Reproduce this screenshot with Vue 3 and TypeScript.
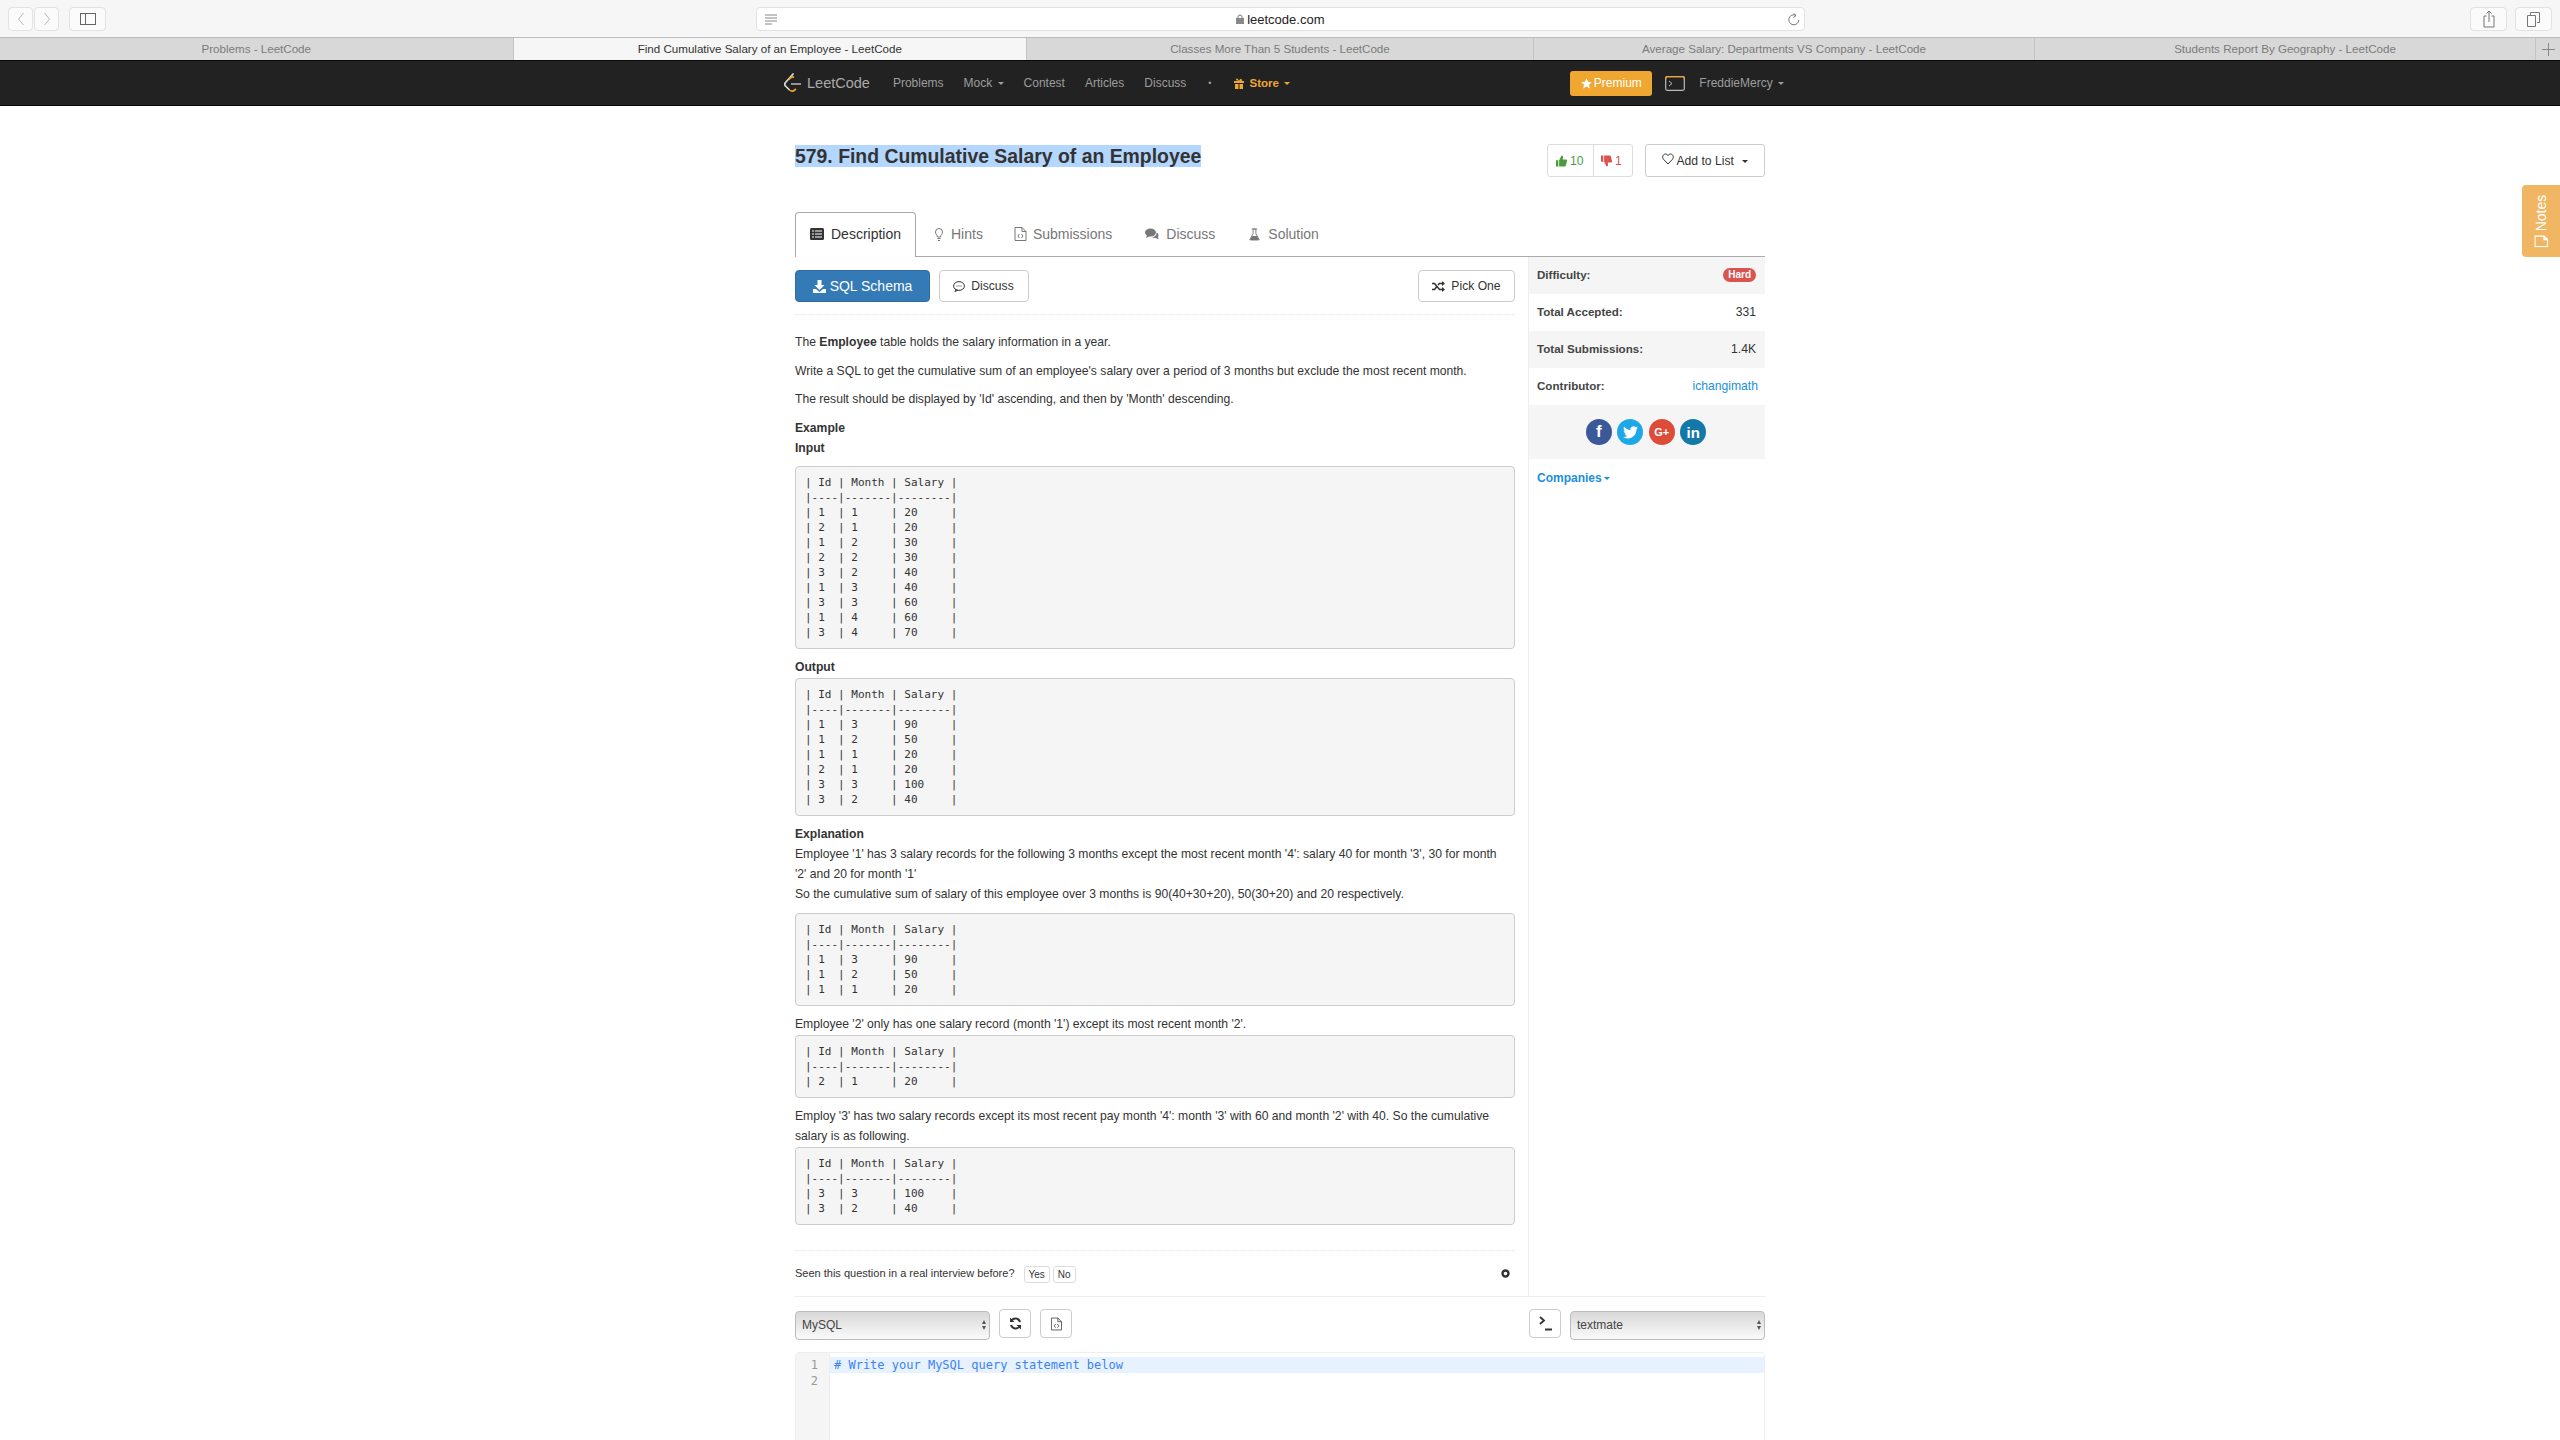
<template>
  <div class="page">
    <div class="toolbar">
      <div class="tb-left">
        <span class="tb-btn small"><svg width="8" height="16" viewBox="0 0 8 16"><path d="M6.500 2 1.500 8l5 6" fill="none" stroke="#b5b5b5" /></svg></span>
        <span class="tb-btn small"><svg width="8" height="16" viewBox="0 0 8 16"><path d="M1.500 2l5 6-5 6" fill="none" stroke="#b5b5b5" /></svg></span>
        <span class="tb-btn wide"><svg width="16" height="12" viewBox="0 0 16 12"><rect x=".5" y=".5" width="15" height="11" fill="none" stroke="#666" /><path d="M5.500 0v12" stroke="#666" /></svg></span>
      </div>
      <div class="address">
        <svg class="reader" width="12" height="11" viewBox="0 0 12 11"><path d="M0 1h12M0 4h12M0 7h12M0 10h7" stroke="#888" /></svg>
        <span class="url"><svg width="8" height="10" viewBox="0 0 8 10"><path d="M2 4V3a2 2 0 0 1 4 0v1" fill="none" stroke="#777" /><rect y="4" width="8" height="6" fill="#888" /></svg> leetcode.com</span>
        <svg class="reload" width="13" height="13" viewBox="0 0 13 13"><path d="M9 2.300A5 5 0 1 0 11.800 7M6.500.300 9 2.500 6.500 4.500" fill="none" stroke="#777" /></svg>
      </div>
      <div class="tb-right">
        <span class="tb-btn wide"><svg width="12" height="18" viewBox="0 0 12 18"><path d="M3.500 6H1v11h10V6H8.500M6 12V1M3.500 3.500 6 1l2.500 2.500" fill="none" stroke="#777" /></svg></span>
        <span class="tb-btn wide"><svg width="13" height="15" viewBox="0 0 13 15"><path d="M3.500 3V.5h9v10H10M.5 3.500h8v11h-8z" fill="none" stroke="#777" /></svg></span>
      </div>
    </div>

    <div class="tabstrip">
      <div v-for="(t, i) in browserTabs" :key="t" class="btab" :class="{ on: i === 1 }">{{ t }}</div>
      <div class="btab plus"><svg width="13" height="13" viewBox="0 0 13 13"><path d="M6.500 0v13M0 6.500h13" stroke="#888" /></svg></div>
    </div>

    <nav class="nav">
      <div class="nav-inner">
        <div class="nav-left">
          <span class="logo">
            <svg width="17" height="20" viewBox="0 0 17 20">
              <path d="M9.500.5 1.500 9.500c-1 1.200-1 2.500 0 3.500l4 4" fill="none" stroke="#d8d8d8" stroke-width="1.700" />
              <path d="M4.500 6.500 7 4.500c1-.8 2-.8 3 0" fill="none" stroke="#f0a732" stroke-width="1.700" />
              <path d="M5.500 17c1.500 1.500 3 1.500 4.500.5L12 16" fill="none" stroke="#f0a732" stroke-width="1.700" />
              <path d="M7 11h10" stroke="#a8a8a8" stroke-width="1.700" />
            </svg>
            <span>LeetCode</span>
          </span>
          <a>Problems</a>
          <a>Mock <i class="caret"></i></a>
          <a>Contest</a>
          <a>Articles</a>
          <a>Discuss</a>
          <a class="dot">•</a>
          <a class="store">
            <svg width="10" height="11" viewBox="0 0 10 11"><path d="M0 3h10v2H0zM1 6h3.500v5H1zM5.500 6H9v5H5.500zM5 3C3 3 2 2 2 1s2-1 3 2c1-3 3-2 3-1s-1 2-3 2z" fill="#f0a732" /></svg>
            <span>Store</span> <i class="caret"></i>
          </a>
        </div>
        <div class="nav-right">
          <span class="premium"><svg width="11" height="11" viewBox="0 0 24 24"><path d="m12 1 3.400 7.400 8 .9-6 5.400 1.700 8L12 18.700l-7.100 4 1.700-8-6-5.400 8-.9z" fill="#fff" /></svg> Premium</span>
          <span class="term"><svg width="20" height="15" viewBox="0 0 20 15"><rect x=".7" y=".7" width="18.600" height="13.600" rx="1.500" fill="none" stroke="#bbb" stroke-width="1.200" /><path d="M.7 3.500V2.200A1.500 1.500 0 0 1 2.200.7h15.600a1.500 1.500 0 0 1 1.500 1.500v1.300" fill="none" stroke="#f0a732" stroke-width="1.200" /><path d="m4 5 3 2.500L4 10" fill="none" stroke="#bbb" /></svg></span>
          <a class="user">FreddieMercy <i class="caret"></i></a>
        </div>
      </div>
    </nav>

    <main class="container">
      <div class="head">
        <h3 class="title"><span>579. Find Cumulative Salary of an Employee</span></h3>
        <div class="head-actions">
          <div class="likes">
            <span class="like">
              <svg width="11" height="12" viewBox="0 0 14 14"><path d="M0 6h3v8H0zM4 6l3-6c1.500 0 2 1 2 2.500L8.500 5H13c1 0 1.300 1 1 2l-1.500 6c-.2.700-.7 1-1.500 1H4z" fill="#4a9c3f" /></svg>
              10
            </span>
            <span class="dislike">
              <svg width="11" height="12" viewBox="0 0 14 14"><path d="M0 0h3v8H0zM4 8l3 6c1.500 0 2-1 2-2.500L8.500 9H13c1 0 1.300-1 1-2l-1.500-6c-.2-.700-.7-1-1.500-1H4z" fill="#d9534f" /></svg>
              1
            </span>
          </div>
          <button class="add-list">
            <svg width="12" height="12" viewBox="0 0 24 24"><path d="M12 22 3 12.500C-1 7 3 2 7 2c2 0 4 1 5 3 1-2 3-3 5-3 4 0 8 5 4 10.500z" fill="none" stroke="#333" stroke-width="2" /></svg>
            Add to List <i class="caret dark"></i>
          </button>
        </div>
      </div>

      <ul class="tabs">
        <li class="on">
          <svg width="14" height="12" viewBox="0 0 14 12"><rect width="14" height="12" rx="1.500" fill="#333" /><path d="M2 3h2M5 3h7M2 6h2M5 6h7M2 9h2M5 9h7" stroke="#fff" /></svg>
          Description
        </li>
        <li class="hints">
          <svg width="8" height="13" viewBox="0 0 8 13"><path d="M2.500 9C2.500 7 .5 6.500.5 4a3.500 3.500 0 0 1 7 0c0 2.500-2 3-2 5zM2.500 10.500h3M3 12.500h2" fill="none" stroke="#777" /></svg>
          Hints
        </li>
        <li class="subs">
          <svg width="13" height="14" viewBox="0 0 12 14"><path d="M.5.500h7l4 4v9H.5zM7.500.500v4h4M5 7 3.500 9 5 11M7 7l1.500 2L7 11" fill="none" stroke="#777" /></svg>
          Submissions
        </li>
        <li class="disc">
          <svg width="14" height="12" viewBox="0 0 14 12"><ellipse cx="5.500" cy="4.500" rx="5.500" ry="4" fill="#777" /><path d="M2 7 1 10l4-2zM11.500 4.500c2 .7 2.500 3 1.500 4.300l.5 2.700L11 10c-1.500.3-3 0-4-1 3 0 5-1.800 4.500-4.500z" fill="#777" /></svg>
          Discuss
        </li>
        <li class="sol">
          <svg width="11" height="13" viewBox="0 0 12 13"><path d="M4.500.500h3v5l3.500 6.500-.500.500H1.500l-.5-.5 3.500-6.500zM3 .500h6" fill="none" stroke="#777" /><path d="M3.500 8h5l2.500 4.500H1z" fill="#777" /></svg>
          Solution
        </li>
      </ul>

      <div class="columns">
        <div class="main-col">
          <div class="actions">
            <button class="btn primary">
              <svg width="13" height="13" viewBox="0 0 13 13"><path d="M4.500 0h4v5h3L6.500 10l-5-5h3zM0 9h3l3.500 3L10 9h3v4H0z" fill="#fff" /></svg>
              SQL Schema
            </button>
            <button class="btn small-btn">
              <svg width="12" height="11" viewBox="0 0 12 11"><ellipse cx="6" cy="5" rx="5.400" ry="4.400" fill="none" stroke="#333" /><path d="M3 8 2 10.500 5 9" fill="none" stroke="#333" /><path d="M3.500 5h1M5.500 5h1M7.500 5h1" stroke="#333" /></svg>
              Discuss
            </button>
            <button class="btn small-btn pick">
              <svg width="13" height="11" viewBox="0 0 13 11"><path d="M0 2.500h2.500l5 6H10M0 8.500h2.500L4.500 6M6 4l1.500-1.500H10" fill="none" stroke="#333" stroke-width="1.600" /><path d="M10 0l3 2.500L10 5zM10 6l3 2.500L10 11z" fill="#333" /></svg>
              Pick One
            </button>
          </div>

          <div class="question">
            <p>The <b>Employee</b> table holds the salary information in a year.</p>
            <p>Write a SQL to get the cumulative sum of an employee's salary over a period of 3 months but exclude the most recent month.</p>
            <p>The result should be displayed by 'Id' ascending, and then by 'Month' descending.</p>
            <p class="flush"><b>Example</b></p>
            <p><b>Input</b></p>
            <pre>{{ inputTable }}</pre>
            <p class="snug"><b>Output</b></p>
            <pre>{{ outputTable }}</pre>
            <p><b>Explanation</b><br />Employee '1' has 3 salary records for the following 3 months except the most recent month '4': salary 40 for month '3', 30 for month '2' and 20 for month '1'<br />So the cumulative sum of salary of this employee over 3 months is 90(40+30+20), 50(30+20) and 20 respectively.</p>
            <pre>{{ emp1Table }}</pre>
            <p class="snug">Employee '2' only has one salary record (month '1') except its most recent month '2'.</p>
            <pre>{{ emp2Table }}</pre>
            <p class="snug">Employ '3' has two salary records except its most recent pay month '4': month '3' with 60 and month '2' with 40. So the cumulative salary is as following.</p>
            <pre class="last">{{ emp3Table }}</pre>
          </div>

          <div class="interview">
            <span>Seen this question in a real interview before?</span>
            <button class="yes">Yes</button>
            <button>No</button>
            <svg class="gear" width="9" height="9" viewBox="0 0 9 9"><circle cx="4.500" cy="4.500" r="3" fill="none" stroke="#333" stroke-width="2.400" /></svg>
          </div>
        </div>

        <aside class="side">
          <div class="row grey"><b>Difficulty:</b><span class="hard">Hard</span></div>
          <div class="row"><b>Total Accepted:</b><span>331</span></div>
          <div class="row grey"><b>Total Submissions:</b><span>1.4K</span></div>
          <div class="row"><b>Contributor:</b><a class="link">ichangimath</a></div>
          <div class="share">
            <span class="fb">f</span>
            <span class="tw"><svg width="15" height="13" viewBox="0 0 24 20"><path d="M24 2.400c-.9.400-1.800.700-2.800.800 1-.6 1.800-1.600 2.200-2.700-1 .6-2 1-3.100 1.200A4.900 4.900 0 0 0 11.900 6.200C7.800 6 4.200 4 1.700.9c-1.300 2.200-.7 5.100 1.500 6.600-.8 0-1.600-.2-2.200-.6 0 2.400 1.700 4.400 3.900 4.900-.7.200-1.500.2-2.200.1.600 2 2.400 3.400 4.600 3.400A9.900 9.900 0 0 1 0 17.300 14 14 0 0 0 21.500 4.900c1-.7 1.800-1.500 2.500-2.500z" fill="#fff" /></svg></span>
            <span class="gp">G+</span>
            <span class="li">in</span>
          </div>
          <a class="companies">Companies<i class="caret blue"></i></a>
        </aside>
      </div>

      <div class="editor-bar">
        <div class="select lang">MySQL<i class="updown"></i></div>
        <button class="icon-btn"><svg width="13" height="13" viewBox="0 0 13 13"><path d="M11 5A4.800 4.800 0 0 0 2.500 3.500M2 8a4.800 4.800 0 0 0 8.500 1.500" fill="none" stroke="#333" stroke-width="2" /><path d="M1 .5v4.500h4.500zM12 12.500V8H7.500z" fill="#333" /></svg></button>
        <button class="icon-btn"><svg width="11" height="14" viewBox="0 0 12 14"><path d="M.5.500h7l4 4v9H.5zM7.500.500v4h4M5 7 3.500 9 5 11M7 7l1.500 2L7 11" fill="none" stroke="#555" /></svg></button>
        <span class="grow"></span>
        <button class="icon-btn term-btn"><svg width="13" height="15" viewBox="0 0 13 15"><path d="m1 1 4 3.500L1 8" fill="none" stroke="#333" stroke-width="1.800" /><path d="M6 13.500h7" stroke="#333" stroke-width="2" /></svg></button>
        <div class="select theme">textmate<i class="updown"></i></div>
      </div>

      <div class="editor">
        <div class="gutter"><div>1</div><div>2</div></div>
        <div class="code"><div class="active"># Write your MySQL query statement below</div></div>
      </div>
    </main>

    <div class="notes">
      <span><svg width="12" height="14" viewBox="0 0 12 14"><path d="M.7.700h10.600v9l-3.500 3.600H.7zM7.800 13.300V9.700h3.500" fill="none" stroke="#fff" stroke-width="1.300" /></svg> Notes</span>
    </div>
  </div>
</template>

<script setup lang="ts">
const browserTabs = [
  'Problems - LeetCode',
  'Find Cumulative Salary of an Employee - LeetCode',
  'Classes More Than 5 Students - LeetCode',
  'Average Salary: Departments VS Company - LeetCode',
  'Students Report By Geography - LeetCode'
]

const head = `| Id | Month | Salary |
|----|-------|--------|`

function table(rows: Array<[number, number, number]>): string {
  const body = rows.map(([id, month, salary]) =>
    `| ${id}  | ${String(month).padEnd(5)} | ${String(salary).padEnd(6)} |`)
  return [head, ...body].join('\n')
}

const inputTable = table([
  [1, 1, 20], [2, 1, 20], [1, 2, 30], [2, 2, 30], [3, 2, 40],
  [1, 3, 40], [3, 3, 60], [1, 4, 60], [3, 4, 70]
])
const outputTable = table([
  [1, 3, 90], [1, 2, 50], [1, 1, 20], [2, 1, 20], [3, 3, 100], [3, 2, 40]
])
const emp1Table = table([[1, 3, 90], [1, 2, 50], [1, 1, 20]])
const emp2Table = table([[2, 1, 20]])
const emp3Table = table([[3, 3, 100], [3, 2, 40]])
</script>

<style>
html, body { margin: 0; height: 1440px; overflow: hidden; background: #fff; }
</style>

<style scoped>
.page {
  position: relative;
  height: 1440px;
  overflow: hidden;
  font-family: "Liberation Sans", Arial, sans-serif;
  font-size: 12.15px;
  color: #333;
}
.toolbar {
  height: 37px;
  box-sizing: border-box;
  background: #f6f6f6;
  display: flex;
  justify-content: space-between;
  padding: 7px 8px 0;
}
.tb-left { display: flex; gap: 1px; }
.tb-left .wide { margin-left: 9px; }
.tb-right { display: flex; gap: 8px; }
.tb-btn {
  height: 24px;
  box-sizing: border-box;
  border: 1px solid #e2e2e2;
  border-radius: 4px;
  background: #fbfbfb;
  display: flex;
  align-items: center;
  justify-content: center;
}
.tb-btn.small { width: 25px; }
.tb-btn.wide { width: 37px; }
.address {
  width: 1049px;
  height: 24px;
  box-sizing: border-box;
  border: 1px solid #e2e2e2;
  border-radius: 4px;
  background: #fff;
  display: flex;
  align-items: center;
  justify-content: center;
  color: #222;
  font-size: 13px;
  position: relative;
  margin-right: 16px;
}
.reader { position: absolute; left: 8px; top: 6px; }
.reload { position: absolute; right: 4px; top: 5px; }
.tabstrip {
  height: 23px;
  box-sizing: border-box;
  display: flex;
  background: #d8d8d8;
  border-top: 1px solid #bcbcbc;
  font-size: 11.6px;
  color: #7b7b7b;
}
.btab {
  flex: 0 0 501px;
  box-sizing: border-box;
  text-align: center;
  line-height: 22px;
  border-right: 1px solid #c4c4c4;
}
.btab:nth-child(1), .btab:nth-child(2) { flex-basis: 513.5px; }
.btab:nth-child(3) { flex-basis: 507px; }
.btab.on { background: #f6f6f6; color: #333; }
.btab.plus { flex: 1; border: none; display: flex; align-items: center; justify-content: center; }
.nav {
  height: 46px;
  box-sizing: border-box;
  background: #222;
  border-top: 1px solid #080808;
  border-bottom: 1px solid #080808;
}
.nav-inner {
  width: 970px;
  margin: 0 auto;
  height: 44px;
  display: flex;
  justify-content: space-between;
  align-items: center;
  color: #9d9d9d;
  font-size: 12px;
}
.nav-left, .nav-right { display: flex; align-items: center; }
.nav-left a { margin-left: 20px; }
.logo { display: flex; align-items: center; gap: 6px; margin-left: -11px; margin-right: 3px; font-size: 14.5px; color: #aaa; }
.nav-left .dot { font-size: 9px; margin-left: 22px; }
.nav-left .store {
  color: #f0a732;
  font-weight: bold;
  font-size: 11.5px;
  margin-left: 23px;
  display: flex;
  align-items: center;
  gap: 5px;
}
.store .caret { margin-left: 0; }
.caret {
  display: inline-block;
  width: 0;
  height: 0;
  vertical-align: middle;
  margin-left: 2px;
  border-top: 3px solid;
  border-left: 3px solid transparent;
  border-right: 3px solid transparent;
}
.premium {
  background: #f0a732;
  color: #fff;
  height: 25px;
  width: 82px;
  display: flex;
  align-items: center;
  justify-content: center;
  gap: 2px;
  border-radius: 3px;
}
.term { margin-left: 13px; display: flex; }
.user { margin-left: 14px; margin-right: -19px; }

.container { width: 970px; margin: 0 auto; }
.head {
  display: flex;
  justify-content: space-between;
  height: 106px;
}
.title {
  margin: 0;
  padding-top: 38px;
  font-size: 19.4px;
  line-height: 24px;
  font-weight: bold;
}
.title span { background: #b3d7ff; }
.head-actions { display: flex; gap: 12px; padding-top: 38px; align-items: flex-start; }
.likes {
  display: flex;
  width: 86px;
  height: 33px;
  box-sizing: border-box;
  border: 1px solid #ddd;
  border-radius: 3px;
  align-items: center;
}
.like, .dislike { height: 100%; display: flex; align-items: center; gap: 3px; box-sizing: border-box; }
.like { color: #4a9c3f; border-right: 1px solid #ddd; width: 46px; padding-left: 8px; }
.dislike { color: #d9534f; padding-left: 7px; }
.add-list {
  height: 33px;
  width: 120px;
  padding: 0;
  background: #fff;
  border: 1px solid #ccc;
  border-radius: 3px;
  font: inherit;
  color: #333;
}
.add-list .caret { margin-left: 5px; }
.tabs {
  list-style: none;
  margin: 0;
  padding: 0;
  display: flex;
  height: 45px;
  box-sizing: border-box;
  border-bottom: 1px solid #aaa;
  font-size: 14px;
  color: #777;
}
.tabs li {
  display: flex;
  align-items: center;
  gap: 6px;
  padding: 0 16px;
}
.tabs li.hints { padding: 0 15px 0 19px; gap: 8px; }
.tabs li.subs { padding-right: 17px; }
.tabs li.disc { gap: 7px; padding-right: 18px; }
.tabs li.sol { gap: 8px; }
.tabs li.on {
  color: #333;
  height: 45px;
  box-sizing: border-box;
  width: 121px;
  padding: 0 0 2px 14px;
  gap: 7px;
  background: #fff;
  border: 1px solid #aaa;
  border-bottom: none;
  border-radius: 4px 4px 0 0;
}
.columns { display: flex; gap: 13px; }
.main-col { width: 720px; flex: none; }
.actions {
  display: flex;
  gap: 8.500px;
  padding-top: 13px;
  height: 58px;
  box-sizing: border-box;
  border-bottom: 1px dotted #e5e5e5;
  align-items: flex-start;
}
.btn {
  height: 32px;
  box-sizing: border-box;
  border: 1px solid #ccc;
  border-radius: 4px;
  background: #fff;
  color: #333;
  font: inherit;
  display: flex;
  align-items: center;
  justify-content: center;
  gap: 4px;
  padding: 0;
}
.primary { width: 135px; background: #337ab7; border-color: #2e6da4; color: #fff; font-size: 14px; }
.small-btn { width: 90px; }
.small-btn svg { margin-right: 2px; }
.pick { width: 97px; margin-left: auto; }
.question { padding-top: 17px; line-height: 20px; }
.question p { margin: 0 0 8.5px; padding-right: 8px; }
.question p.flush { margin-bottom: 0; }
.question p.snug { margin-bottom: 1px; }
pre {
  margin: 0 0 8px;
  padding: 8px 9px;
  background: #f5f5f5;
  border: 1px solid #ccc;
  border-radius: 4px;
  font-family: "DejaVu Sans Mono", monospace;
  font-size: 11px;
  line-height: 15px;
}
pre.last { margin-bottom: 25px; }
.interview {
  border-top: 1px dotted #e5e5e5;
  height: 46.500px;
  box-sizing: border-box;
  display: flex;
  align-items: center;
  font-size: 11px;
}
.interview button {
  height: 17px;
  padding: 0 4px;
  margin: 2px 0 0 3px;
  background: #fff;
  border: 1px solid #ddd;
  border-radius: 3px;
  font: inherit;
  font-size: 10px;
  color: #333;
}
.interview button.yes { margin-left: 9px; }
.gear { margin-left: auto; margin-right: 5px; }
.side { width: 237px; border-left: 1px solid #eee; }
.row {
  height: 37px;
  box-sizing: border-box;
  display: flex;
  justify-content: space-between;
  align-items: center;
  padding: 0 9px 2px 8px;
}
.row b { color: #444; font-size: 11.6px; }
.grey { background: #f5f5f5; }
.hard {
  background: #d9534f;
  color: #fff;
  font-size: 10px;
  font-weight: bold;
  line-height: 12px;
  padding: 1px 5px;
  border-radius: 8px;
}
.link, .companies { color: #1a8fdc; }
.link { margin-right: -2px; }
.share {
  height: 54px;
  background: #f5f5f5;
  display: flex;
  justify-content: center;
  align-items: center;
  gap: 5.500px;
  padding-right: 2px;
}
.share span {
  width: 26px;
  height: 26px;
  border-radius: 50%;
  color: #fff;
  font-weight: bold;
  display: flex;
  align-items: center;
  justify-content: center;
  font-size: 13px;
}
.share .fb { background: #3b5998; font-size: 17px; }
.tw { background: #1fa8e8; }
.share .gp { background: #dd4b39; font-size: 11px; }
.share .li { background: #1478a8; font-size: 15px; }
.companies { display: block; padding: 12px 8px; font-weight: bold; font-size: 12px; }
.editor-bar {
  display: flex;
  gap: 9px;
  align-items: flex-start;
  height: 56px;
  padding-top: 12px;
  box-sizing: border-box;
  border-top: 1px solid #eee;
}
.grow { flex: 1; }
.select {
  height: 29px;
  margin-top: 2px;
  box-sizing: border-box;
  border: 1px solid #bbb;
  border-radius: 4px;
  background: linear-gradient(#d8d8d8, #fafafa);
  padding: 0 6px;
  line-height: 27px;
  position: relative;
  color: #444;
  font-size: 12px;
}
.updown {
  position: absolute;
  right: 3px;
  top: 8px;
  width: 0;
  height: 0;
  border-left: 2.500px solid transparent;
  border-right: 2.500px solid transparent;
  border-bottom: 4px solid #555;
}
.updown::after {
  content: "";
  position: absolute;
  left: -2.500px;
  top: 6px;
  border-left: 2.500px solid transparent;
  border-right: 2.500px solid transparent;
  border-top: 4px solid #555;
}
.lang { width: 195px; }
.theme { width: 195px; }
.icon-btn {
  width: 32px;
  height: 29px;
  padding: 0;
  background: #fff;
  border: 1px solid #ccc;
  border-radius: 4px;
  display: flex;
  align-items: center;
  justify-content: center;
}
.editor {
  display: flex;
  height: 120px;
  border: 1px solid #eee;
  border-radius: 4px 4px 0 0;
  font-family: "DejaVu Sans Mono", monospace;
  font-size: 12px;
  line-height: 16px;
}
.gutter {
  width: 34px;
  flex: none;
  box-sizing: border-box;
  background: #f5f5f5;
  color: #999;
  padding: 4px 11px 0 0;
  text-align: right;
  border-right: 1px solid #eee;
}
.code { flex: 1; padding-top: 4px; }
.active { background: #e8f2fe; color: #3b82f6; padding-left: 4px; }
.notes {
  position: absolute;
  right: 0;
  top: 185px;
  width: 38px;
  height: 72px;
  background: #f0ad4e;
  opacity: .88;
  border-radius: 4px 0 0 4px;
  color: #fff;
  display: flex;
  align-items: center;
  justify-content: center;
}
.notes span {
  transform: rotate(-90deg);
  white-space: nowrap;
  font-size: 14px;
  display: flex;
  gap: 4px;
  align-items: center;
}
</style>
